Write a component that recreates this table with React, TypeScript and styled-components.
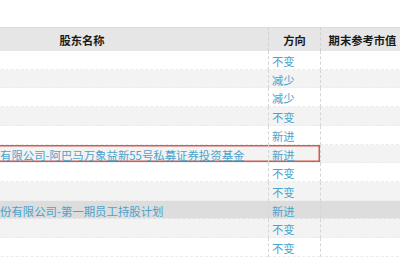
import React from "react";
import styled, { createGlobalStyle, css } from "styled-components";

const GlobalStyle = createGlobalStyle`
  html, body {
    margin: 0;
    padding: 0;
    background: #ffffff;
  }
  body {
    font-family: "Noto Sans CJK SC", "Liberation Sans", sans-serif;
  }
`;

const Page = styled.div`
  width: 400px;
  height: 260px;
  padding-top: 27px;
  box-sizing: border-box;
  overflow: hidden;
  background: #ffffff;
`;

const Table = styled.table`
  margin-left: -104px;
  border-collapse: separate;
  border-spacing: 0;
  table-layout: fixed;
  width: 508px;
  font-size: 11.3px;
`;

const HeadCell = styled.th<{ $w: number; $divider?: boolean }>`
  width: ${({ $w }) => $w}px;
  height: 24px;
  padding: 1px 0 0;
  background: #e6e6e6;
  border-top: 1px solid #dcdcdc;
  color: #1a1a1a;
  font-weight: bold;
  text-align: center;
  white-space: nowrap;
  overflow: hidden;
  box-sizing: border-box;
  ${({ $divider }) =>
    $divider &&
    css`
      border-left: 1px dashed #cfcfcf;
    `}
`;

const Row = styled.tr<{ $stripe: boolean; $hover?: boolean }>`
  background: ${({ $stripe, $hover }) =>
    $hover ? "#dddddd" : $stripe ? "#f3f3f3" : "#ffffff"};
`;

const Cell = styled.td<{ $divider?: boolean; $mark?: "mid" | "end" }>`
  padding: 3px 0 0 3px;
  height: 18.7px;
  line-height: 14.7px;
  color: #4aa3cc;
  white-space: nowrap;
  overflow: hidden;
  border-bottom: 1px dashed #ececec;
  box-sizing: border-box;
  ${({ $divider }) =>
    $divider &&
    css`
      border-left: 1px dashed #d4d4d4;
    `}
  ${({ $mark }) =>
    $mark === "mid" &&
    css`
      box-shadow: inset 0 1.5px 0 #d65a4f, inset 0 -1.5px 0 #d65a4f;
    `}
  ${({ $mark }) =>
    $mark === "end" &&
    css`
      box-shadow: inset 0 1.5px 0 #d65a4f, inset 0 -1.5px 0 #d65a4f,
        inset -1.5px 0 0 #d65a4f;
    `}
`;

const NameCell = styled(Cell)`
  padding-left: 1.5px;
  font-size: 11.4px;
`;

type Holder = { name: string; dir: string };

const rows: Holder[] = [
  { name: "", dir: "不变" },
  { name: "", dir: "减少" },
  { name: "", dir: "减少" },
  { name: "", dir: "不变" },
  { name: "", dir: "新进" },
  { name: "杭州阿巴马投资管理有限公司-阿巴马万象益新55号私募证券投资基金", dir: "新进" },
  { name: "", dir: "不变" },
  { name: "", dir: "不变" },
  { name: "杭州泰格医药科技股份有限公司-第一期员工持股计划", dir: "新进" },
  { name: "", dir: "不变" },
  { name: "", dir: "不变" },
];

const App = () => {
  return (
    <Page>
      <GlobalStyle />
      <Table>
        <thead>
          <tr>
            <HeadCell $w={372}>股东名称</HeadCell>
            <HeadCell $w={52} $divider>
              方向
            </HeadCell>
            <HeadCell $w={84} $divider>
              期末参考市值
            </HeadCell>
          </tr>
        </thead>
        <tbody>
          {rows.map((item, index) => {
            const marked = index === 5;
            return (
              <Row key={`holder${index}`} $stripe={index % 2 === 1} $hover={index === 8}>
                <NameCell $mark={marked ? "mid" : undefined}>{item.name}</NameCell>
                <Cell $divider $mark={marked ? "end" : undefined}>
                  {item.dir}
                </Cell>
                <Cell $divider />
              </Row>
            );
          })}
        </tbody>
      </Table>
    </Page>
  );
};

export default App;
